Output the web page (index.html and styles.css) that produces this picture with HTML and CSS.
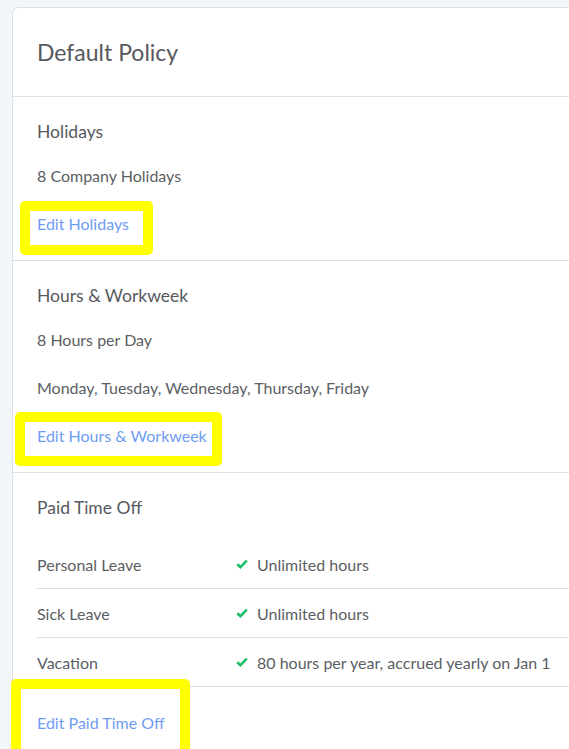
FILE: index.html
```html
<!DOCTYPE html>
<html lang="en">
<head>
    <meta charset="UTF-8">
    <title>Default Policy</title>
    <link rel="stylesheet" href="styles.css">
</head>
<body>
    <div class="card">
        <div class="card-header">
            <h1>Default Policy</h1>
        </div>

        <div class="section">
            <h2>Holidays</h2>
            <div class="line">8 Company Holidays</div>
            <div class="line">
                <span class="mark mark-holidays"><a href="#">Edit Holidays</a></span>
            </div>
        </div>

        <div class="section">
            <h2>Hours &amp; Workweek</h2>
            <div class="line">8 Hours per Day</div>
            <div class="line">Monday, Tuesday, Wednesday, Thursday, Friday</div>
            <div class="line">
                <span class="mark mark-hours"><a href="#">Edit Hours &amp; Workweek</a></span>
            </div>
        </div>

        <div class="section section-pto">
            <h2>Paid Time Off</h2>
            <div class="pto-list">
                <div class="pto-row">
                    <div class="pto-name">Personal Leave</div>
                    <div class="pto-value"><svg class="check" viewBox="0 0 12 10"><path d="M1.3 5.2 L4.4 8.2 L10.8 1.6"/></svg>Unlimited hours</div>
                </div>
                <div class="pto-row">
                    <div class="pto-name">Sick Leave</div>
                    <div class="pto-value"><svg class="check" viewBox="0 0 12 10"><path d="M1.3 5.2 L4.4 8.2 L10.8 1.6"/></svg>Unlimited hours</div>
                </div>
                <div class="pto-row">
                    <div class="pto-name">Vacation</div>
                    <div class="pto-value"><svg class="check" viewBox="0 0 12 10"><path d="M1.3 5.2 L4.4 8.2 L10.8 1.6"/></svg>80 hours per year, accrued yearly on Jan 1</div>
                </div>
            </div>
            <div class="line line-pto">
                <span class="mark mark-pto"><a href="#">Edit Paid Time Off</a></span>
            </div>
        </div>
    </div>
</body>
</html>
```

FILE: styles.css
```css
body {
    margin: 0;
    background-color: #f3f6f9;
    font-family: 'Lato', 'Liberation Sans', sans-serif;
    color: #5b5e63;
    overflow: hidden;
    height: 749px;
}

.card {
    margin: 7px -40px 0 12px;
    background: #fff;
    border: 1px solid #dde1e6;
    border-radius: 7px 7px 0 0;
    min-height: 800px;
}

.card-header {
    height: 88px;
    display: flex;
    align-items: center;
    padding-left: 24px;
    border-bottom: 1px solid #dcdfe4;
}

h1 {
    margin: 0;
    font-size: 23px;
    font-weight: 400;
    color: #56595e;
}

.section {
    padding: 24px 0 24px 24px;
    border-bottom: 1px solid #dcdfe4;
}

.section-pto {
    border-bottom: none;
}

h2 {
    margin: 0 0 21px;
    font-size: 17.5px;
    line-height: 22px;
    font-weight: 400;
    color: #56595e;
}

.line {
    font-size: 16px;
    line-height: 24px;
    margin-bottom: 24px;
}

.section .line:last-child {
    margin-bottom: 0;
}

a {
    color: #6f9cf2;
    text-decoration: none;
}

/* yellow annotation boxes drawn over the links */
.mark {
    position: relative;
    display: inline-block;
}

.mark::before {
    content: "";
    position: absolute;
    box-sizing: border-box;
    border: 10px solid #ffff00;
    border-radius: 5px;
    pointer-events: none;
}

.mark-holidays::before {
    left: -17px;
    width: 133px;
    top: -11px;
    height: 54px;
}

.mark-hours::before {
    left: -22px;
    width: 207px;
    top: -12px;
    height: 54px;
}

.mark-pto::before {
    left: -26px;
    width: 179px;
    top: -32px;
    height: 90px;
}

.pto-row {
    display: flex;
    height: 48px;
    align-items: center;
    border-bottom: 1px solid #dcdfe4;
    font-size: 16px;
}

.pto-name {
    width: 199px;
    flex-shrink: 0;
}

.pto-value {
    display: flex;
    align-items: center;
}

.check {
    width: 12px;
    height: 10px;
    margin-right: 9px;
    fill: none;
    stroke: #1fbf6a;
    stroke-width: 2.6;
}

.line-pto {
    margin-top: 24px;
}
```
